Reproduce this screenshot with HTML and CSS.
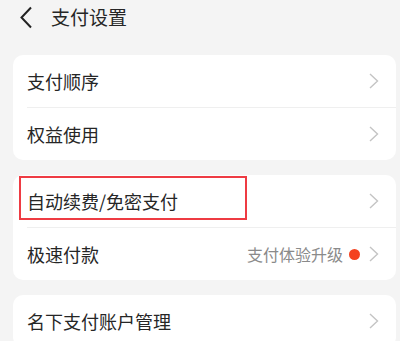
FILE: index.html
```html
<!DOCTYPE html>
<html>

<head lang="zh-CN">
    <meta charset="UTF-8">
    <title>支付设置</title>
    <link rel="stylesheet" href="styles.css">
</head>

<body>
    <div class="header">
        <svg class="back" width="14" height="23" viewBox="0 0 14 23">
            <path d="M12 1.5 L2.5 11.5 L12 21.5" fill="none" stroke="#222" stroke-width="2" />
        </svg>
        <span class="title">支付设置</span>
    </div>

    <div class="card">
        <div class="row">
            <span class="label">支付顺序</span>
            <svg class="arrow" width="10" height="16" viewBox="0 0 10 16"><path d="M1 1 L8.5 8 L1 15" /></svg>
        </div>
        <div class="row">
            <span class="label">权益使用</span>
            <svg class="arrow" width="10" height="16" viewBox="0 0 10 16"><path d="M1 1 L8.5 8 L1 15" /></svg>
        </div>
    </div>

    <div class="card">
        <div class="row">
            <!-- 标注框 -->
            <div class="mark"></div>
            <span class="label">自动续费/免密支付</span>
            <svg class="arrow" width="10" height="16" viewBox="0 0 10 16"><path d="M1 1 L8.5 8 L1 15" /></svg>
        </div>
        <div class="row">
            <span class="label">极速付款</span>
            <span class="extra">支付体验升级</span>
            <span class="dot"></span>
            <svg class="arrow" width="10" height="16" viewBox="0 0 10 16"><path d="M1 1 L8.5 8 L1 15" /></svg>
        </div>
    </div>

    <div class="card">
        <div class="row">
            <span class="label">名下支付账户管理</span>
            <svg class="arrow" width="10" height="16" viewBox="0 0 10 16"><path d="M1 1 L8.5 8 L1 15" /></svg>
        </div>
    </div>
</body>

</html>
```

FILE: styles.css
```css
* {
    margin: 0;
    padding: 0;
}

html,
body {
    height: 100%;
    overflow: hidden;
}

body {
    background-color: #f4f4f4;
    font-family: "Noto Sans CJK SC", "Noto Sans", sans-serif;
    color: #262626;
}

.header {
    display: flex;
    align-items: center;
    height: 34px;
    padding-left: 19px;
    margin-bottom: 21px;
}

.back {
    display: block;
}

.title {
    margin-left: 18px;
    font-size: 19px;
    line-height: 34px;
}

.card {
    margin: 0 4px 15px 13px;
    padding-left: 14px;
    background-color: #fff;
    border-radius: 10px;
}

.row {
    position: relative;
    display: flex;
    align-items: center;
    height: 52px;
    padding-right: 17px;
}

.row + .row {
    border-top: 1px solid #efefef;
}

.label {
    flex: 1;
    font-size: 18px;
}

.extra {
    font-size: 16px;
    color: #8a8a8a;
}

.dot {
    width: 11px;
    height: 11px;
    margin: 0 9px 0 6px;
    border-radius: 50%;
    background-color: #f4411e;
}

.arrow {
    display: block;
}

.arrow path {
    fill: none;
    stroke: #c4c4c4;
    stroke-width: 1.4;
}

.mark {
    position: absolute;
    left: -8px;
    top: 1px;
    width: 224px;
    height: 40px;
    border: 2px solid #ee3b43;
}
```
